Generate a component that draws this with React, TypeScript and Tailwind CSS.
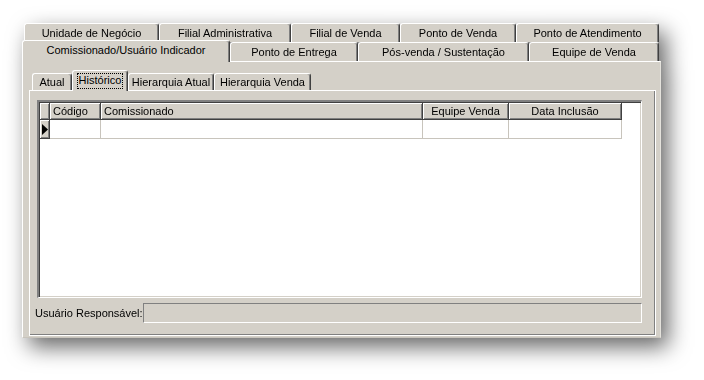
import React from "react";

const topRow = [
  { label: "Unidade de Negócio", w: 135 },
  { label: "Filial Administrativa", w: 132 },
  { label: "Filial de Venda", w: 109 },
  { label: "Ponto de Venda", w: 116 },
  { label: "Ponto de Atendimento", w: 143 },
];

const frontRow = [
  { label: "Ponto de Entrega", w: 128 },
  { label: "Pós-venda / Sustentação", w: 171 },
  { label: "Equipe de Venda", w: 130 },
];

const subTabs = [
  { label: "Atual", w: 40 },
  { label: "Histórico", w: 56, active: true },
  { label: "Hierarquia Atual", w: 86 },
  { label: "Hierarquia Venda", w: 97 },
];

const columns = [
  { label: "Código", w: 51, align: "left" },
  { label: "Comissionado", w: 322, align: "left" },
  { label: "Equipe Venda", w: 86, align: "center" },
  { label: "Data Inclusão", w: 113, align: "center" },
];

const tab =
  "flex items-center justify-center bg-[#d4d0c8] border-l border-t border-white border-r border-r-[#404040] rounded-t-[3px] shadow-[inset_-1px_0_0_#808080]";

function HeaderCell({ label, w, align }: { label: string; w: number; align: string }) {
  return (
    <div
      style={{ width: w }}
      className={
        "h-full flex items-center bg-[#d4d0c8] border-r border-b border-[#404040] shadow-[inset_1px_1px_0_#fff,inset_-1px_-1px_0_#808080] " +
        (align === "center" ? "justify-center" : "pl-[3px]")
      }
    >
      {label}
    </div>
  );
}

export default function App() {
  return (
    <div className="w-[704px] h-[380px] bg-white pl-[22px] pt-[23px] text-[11px] leading-none text-black font-['Liberation_Sans',Arial,sans-serif]">
      <div className="w-[639px] [filter:drop-shadow(7px_9px_11px_rgba(0,0,0,0.6))]">
        {/* back tab row */}
        <div className="flex h-[19px] pl-[2px]">
          {topRow.map((t) => (
            <div key={t.label} style={{ width: t.w }} className={tab}>
              {t.label}
            </div>
          ))}
        </div>

        {/* front tab row */}
        <div className="flex h-[19px] items-start">
          <div className={tab + " w-[208px] h-[22px] -mt-[2px] relative z-10 pb-[2px]"}>
            Comissionado/Usuário Indicador
          </div>
          {frontRow.map((t) => (
            <div key={t.label} style={{ width: t.w }} className={tab + " h-[19px]"}>
              {t.label}
            </div>
          ))}
        </div>

        {/* outer page */}
        <div className="h-[277px] bg-[#d4d0c8] border-l border-t border-white border-r border-r-[#e4e2dc] border-b border-b-[#c8c4bc] pl-[6px] pt-[9px]">
          <div className="flex h-[19px] items-end pl-[3px]">
            {subTabs.map((t) =>
              t.active ? (
                <div
                  key={t.label}
                  style={{ width: t.w }}
                  className={tab + " h-[21px] relative z-10 -mb-[1px] items-start pt-[2px]"}
                >
                  <span className="border border-dotted border-black px-[1px] pt-[1px] pb-[2px]">{t.label}</span>
                </div>
              ) : (
                <div key={t.label} style={{ width: t.w }} className={tab + " h-[17px]"}>
                  {t.label}
                </div>
              )
            )}
          </div>

          {/* inner page */}
          <div className="w-[627px] h-[246px] border-l border-t border-white border-r border-b border-[#404040] shadow-[inset_-1px_-1px_0_#808080] pl-[5px] pt-[9px]">
            <div className="ml-[2px] w-[605px] h-[198px] bg-white border-l-2 border-t-2 border-l-[#808080] border-t-[#808080] border-r border-b border-white shadow-[inset_1px_1px_0_#404040,inset_-1px_-1px_0_#d4d0c8] pl-px pt-px">
              <div className="flex h-[17px]">
                <div className="w-[10px] h-full bg-[#d4d0c8] border-r border-b border-[#404040] shadow-[inset_1px_1px_0_#fff,inset_-1px_-1px_0_#808080]" />
                {columns.map((c) => (
                  <HeaderCell key={c.label} {...c} />
                ))}
              </div>
              <div className="flex h-[19px]">
                <div className="w-[10px] h-full bg-[#d4d0c8] border-r border-b border-[#404040] shadow-[inset_1px_1px_0_#fff,inset_-1px_-1px_0_#808080] flex items-center pl-[2px]">
                  <svg width="6" height="11" viewBox="0 0 6 11">
                    <path d="M0 0 L6 5.5 L0 11 Z" fill="#000" />
                  </svg>
                </div>
                {columns.map((c) => (
                  <div key={c.label} style={{ width: c.w }} className="h-full border-r border-b border-[#c8c4bc]" />
                ))}
              </div>
            </div>

            <div className="flex items-center mt-[5px]">
              <span className="w-[108px]">Usuário Responsável:</span>
              <div className="w-[499px] h-[20px] bg-[#d4d0c8] border-l border-t border-[#808080] border-r border-b border-r-white border-b-white" />
            </div>
          </div>
        </div>
      </div>
    </div>
  );
}
